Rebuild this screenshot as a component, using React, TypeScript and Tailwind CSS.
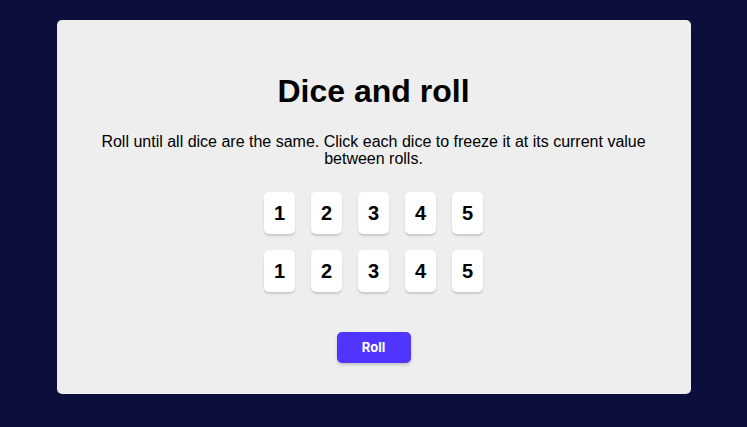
import { useState } from "react";

type Die = {
  id: number;
  value: number;
  held: boolean;
};

const makeDice = (): Die[] =>
  Array.from({ length: 10 }, (_, i) => ({
    id: i,
    value: (i % 5) + 1,
    held: false,
  }));

export default function App() {

  const [dice, setDice] =
    useState<Die[]>(makeDice());

  const toggle = (id: number) =>
    setDice((old) =>
      old.map((d) =>
        d.id === id ? { ...d, held: !d.held } : d
      )
    );

  const roll = () =>
    setDice((old) =>
      old.map((d) =>
        d.held
          ? d
          : { ...d, value: Math.ceil(Math.random() * 6) }
      )
    );

  return (
    <div className="min-h-screen bg-[#0c0e3b] pt-5 font-['Liberation_Sans',Arial,sans-serif]">

      <main className="mx-auto w-[634px] h-[374px] bg-[#eeeeee] rounded-[5px] flex flex-col items-center pt-[53px] px-10">

        <h1 className="text-[32px] leading-[37px] font-bold text-black">
          Dice and roll
        </h1>

        <p className="mt-[23px] text-base leading-[17px] text-black text-center">
          Roll until all dice are the same. Click each dice to freeze it at its current value between rolls.
        </p>

        {/* Dice */}
        <div className="mt-[25px] grid grid-cols-5 gap-x-4 gap-y-4">

          {dice.map((d) => (
            <button
              key={d.id}
              onClick={() => toggle(d.id)}
              className={
                d.held
                  ? "w-[31px] h-[42px] rounded-[5px] bg-[#59e391] shadow-[0_2px_2px_rgba(0,0,0,0.15)] text-xl font-bold text-black flex items-center justify-center"
                  : "w-[31px] h-[42px] rounded-[5px] bg-white shadow-[0_2px_2px_rgba(0,0,0,0.15)] text-xl font-bold text-black flex items-center justify-center"
              }
            >
              {d.value}
            </button>
          ))}

        </div>

        <button
          onClick={roll}
          className="mt-10 w-[74px] h-[31px] rounded-[5px] bg-[#5035ff] text-white text-[13px] font-bold font-['Inter',sans-serif] shadow-[0_2px_3px_rgba(0,0,0,0.18)]"
        >
          Roll
        </button>

      </main>

    </div>
  );
}
